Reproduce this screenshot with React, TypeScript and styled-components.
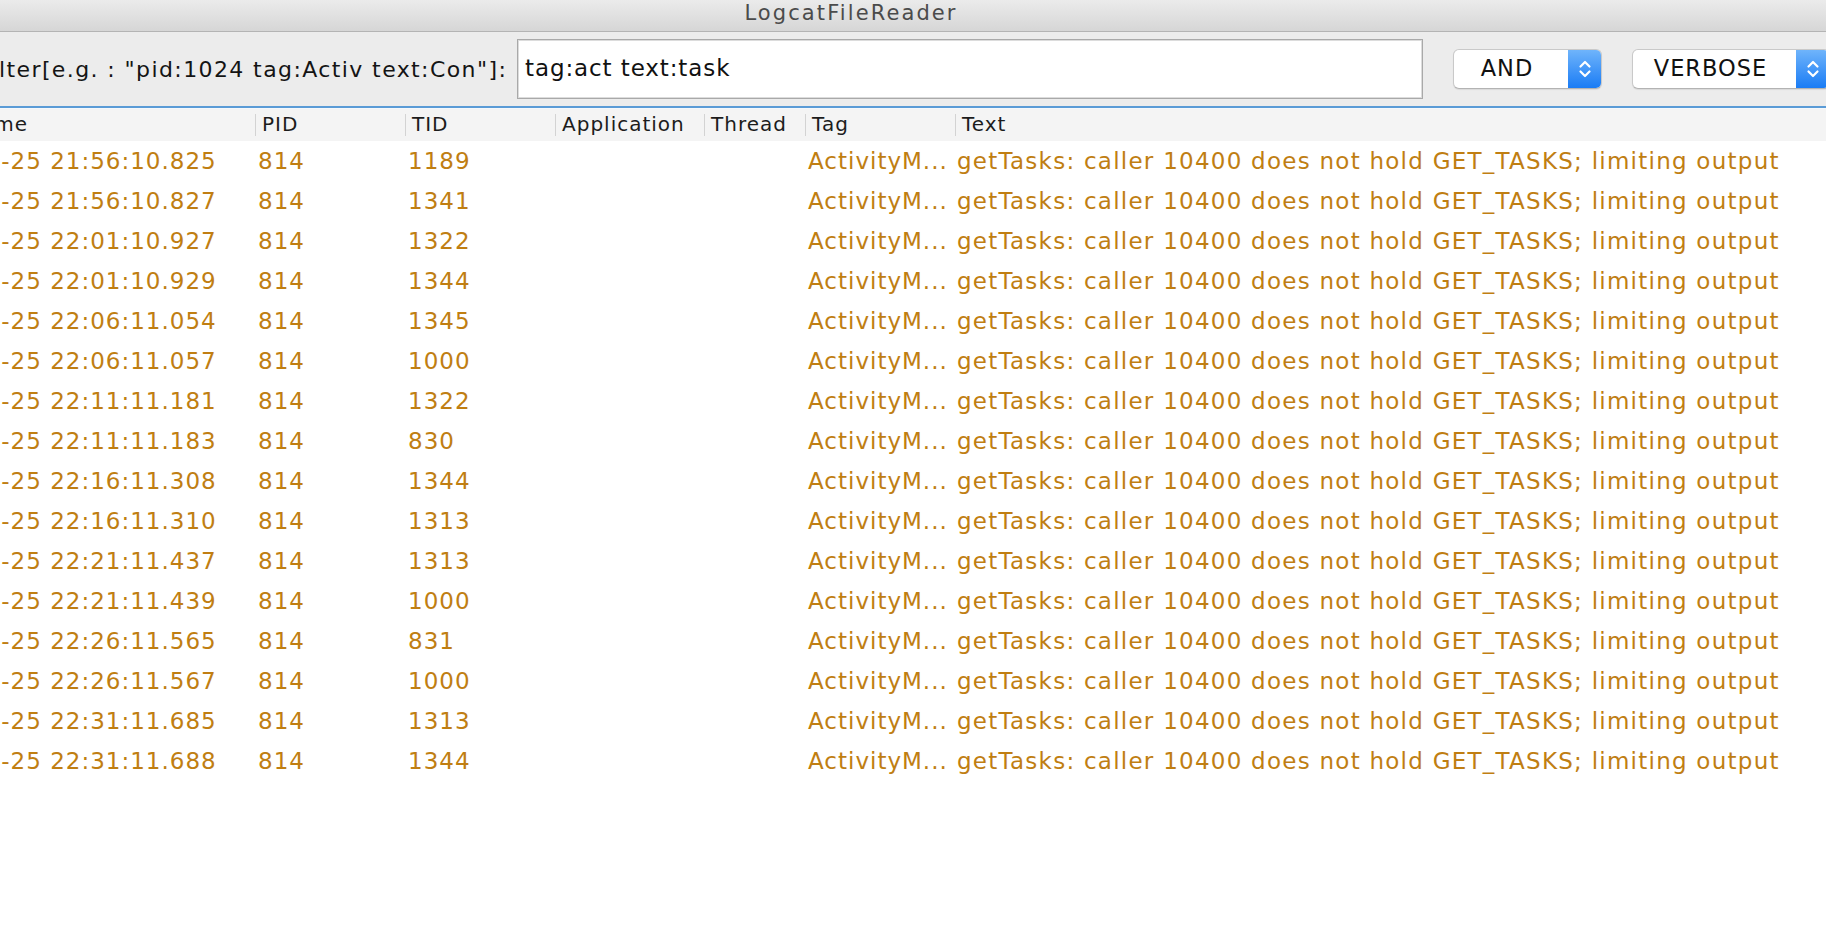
import styled, { createGlobalStyle } from 'styled-components';

const GlobalStyle = createGlobalStyle`
  html, body {
    margin: 0;
    padding: 0;
    background: #ffffff;
    overflow: hidden;
  }
  * {
    box-sizing: border-box;
  }
`;

const FONT = `"DejaVu Sans", "Lucida Grande", Verdana, sans-serif`;
const COLUMNS = '287px 150px 150px 149px 101px 150px 1fr';

const Screen = styled.div`
  width: 1826px;
  height: 928px;
  overflow: hidden;
  background: #ffffff;
  font-family: ${FONT};
`;

// the window runs past the left and right edges of the capture
const Window = styled.div`
  width: 1872px;
  height: 100%;
  margin-left: -32px;
  display: flex;
  flex-direction: column;
  background: #ffffff;
`;

const TitleBar = styled.div`
  height: 32px;
  flex: none;
  padding: 0 106px 5px 0;
  background: linear-gradient(#ebebeb, #d6d6d6);
  border-bottom: 1px solid #b4b4b4;
  text-align: center;
  line-height: 26px;
`;

const Title = styled.span`
  font-size: 21px;
  letter-spacing: 2.1px;
  color: #4b4b4b;
`;

const Toolbar = styled.div`
  height: 76px;
  flex: none;
  display: flex;
  align-items: center;
  gap: 30px;
  padding: 0 10px 0 11px;
  background: #ececec;
  border-bottom: 2px solid #5a9bd6;
`;

const FilterLabel = styled.span`
  width: 508px;
  flex: none;
  white-space: nowrap;
  font-size: 22px;
  letter-spacing: 1.4px;
  color: #141414;
`;

const FilterField = styled.input`
  width: 906px;
  height: 60px;
  flex: none;
  margin: 0;
  padding: 0 0 2px 7px;
  border: 1px solid #a9a9a9;
  box-shadow: inset 0 0 0 1px #dcdcdc;
  background: #ffffff;
  font-family: ${FONT};
  font-size: 23px;
  letter-spacing: 0.9px;
  color: #111111;
  outline: none;
`;

const Combo = styled.div<{ $width: number }>`
  width: ${({ $width }) => $width}px;
  height: 40px;
  flex: none;
  display: flex;
  background: #ffffff;
  border: 1px solid #c9c9c9;
  border-bottom-color: #b3b3b3;
  border-radius: 6px;
  box-shadow: 0 1px 1px rgba(0, 0, 0, 0.08);
  overflow: hidden;
`;

const ComboValue = styled.span`
  flex: 1;
  padding-right: 8px;
  text-align: center;
  line-height: 37px;
  font-size: 22.5px;
  letter-spacing: 1px;
  color: #111111;
`;

const Stepper = styled.div`
  width: 33px;
  flex: none;
  display: flex;
  align-items: center;
  justify-content: center;
  background: linear-gradient(#6fb4fb, #1a7cf5);
`;

const ArrowsIcon = () => (
  <svg width="14" height="24" viewBox="0 0 14 24">
    <path
      d="M2.5 9.5 L7 5 L11.5 9.5 M2.5 14.5 L7 19 L11.5 14.5"
      fill="none"
      stroke="#ffffff"
      strokeWidth="2.2"
      strokeLinecap="round"
      strokeLinejoin="round"
    />
  </svg>
);

const Table = styled.div`
  flex: 1;
  display: flex;
  flex-direction: column;
  border-top: 1px solid #f4f8fc;
`;

const HeaderRow = styled.div`
  height: 32px;
  flex: none;
  display: grid;
  grid-template-columns: ${COLUMNS};
  background: #f4f4f4;
`;

const HeaderCell = styled.div<{ $first?: boolean }>`
  padding-left: 7px;
  line-height: 30px;
  font-size: 20px;
  letter-spacing: 1px;
  color: #1c1c1c;
  white-space: nowrap;
  overflow: hidden;
  background: ${({ $first }) =>
    $first ? 'none' : 'linear-gradient(#d3d3d3, #d3d3d3) left 5px / 1px 22px no-repeat'};
`;

const Row = styled.div`
  height: 40px;
  display: grid;
  grid-template-columns: ${COLUMNS};
`;

const Cell = styled.div<{ $pad?: number; $spacing?: number }>`
  padding-left: ${({ $pad }) => $pad ?? 3}px;
  line-height: 40px;
  font-size: 23px;
  letter-spacing: ${({ $spacing }) => $spacing ?? 1}px;
  color: #c07e12;
  white-space: nowrap;
  overflow: hidden;
`;

const headers = ['Time', 'PID', 'TID', 'Application', 'Thread', 'Tag', 'Text'];

const entries: [string, string][] = [
  ['21:56:10.825', '1189'],
  ['21:56:10.827', '1341'],
  ['22:01:10.927', '1322'],
  ['22:01:10.929', '1344'],
  ['22:06:11.054', '1345'],
  ['22:06:11.057', '1000'],
  ['22:11:11.181', '1322'],
  ['22:11:11.183', '830'],
  ['22:16:11.308', '1344'],
  ['22:16:11.310', '1313'],
  ['22:21:11.437', '1313'],
  ['22:21:11.439', '1000'],
  ['22:26:11.565', '831'],
  ['22:26:11.567', '1000'],
  ['22:31:11.685', '1313'],
  ['22:31:11.688', '1344'],
];

const MESSAGE = 'getTasks: caller 10400 does not hold GET_TASKS; limiting output';

const App = () => {
  return (
    <Screen>
      <GlobalStyle />
      <Window>
        <TitleBar>
          <Title>LogcatFileReader</Title>
        </TitleBar>

        <Toolbar>
          <FilterLabel>Filter[e.g. : "pid:1024 tag:Activ text:Con"]:</FilterLabel>
          <FilterField value="tag:act text:task" readOnly />
          <Combo $width={149}>
            <ComboValue>AND</ComboValue>
            <Stepper>
              <ArrowsIcon />
            </Stepper>
          </Combo>
          <Combo $width={198}>
            <ComboValue>VERBOSE</ComboValue>
            <Stepper>
              <ArrowsIcon />
            </Stepper>
          </Combo>
        </Toolbar>

        <Table>
          <HeaderRow>
            {headers.map((h, i) => (
              <HeaderCell key={h} $first={i === 0}>
                {h}
              </HeaderCell>
            ))}
          </HeaderRow>
          {entries.map(([time, tid], i) => (
            <Row key={i}>
              <Cell $pad={2}>06-25 {time}</Cell>
              <Cell>814</Cell>
              <Cell>{tid}</Cell>
              <Cell />
              <Cell />
              <Cell>ActivityM...</Cell>
              <Cell $pad={2} $spacing={1.25}>
                {MESSAGE}
              </Cell>
            </Row>
          ))}
        </Table>
      </Window>
    </Screen>
  );
};

export default App;
